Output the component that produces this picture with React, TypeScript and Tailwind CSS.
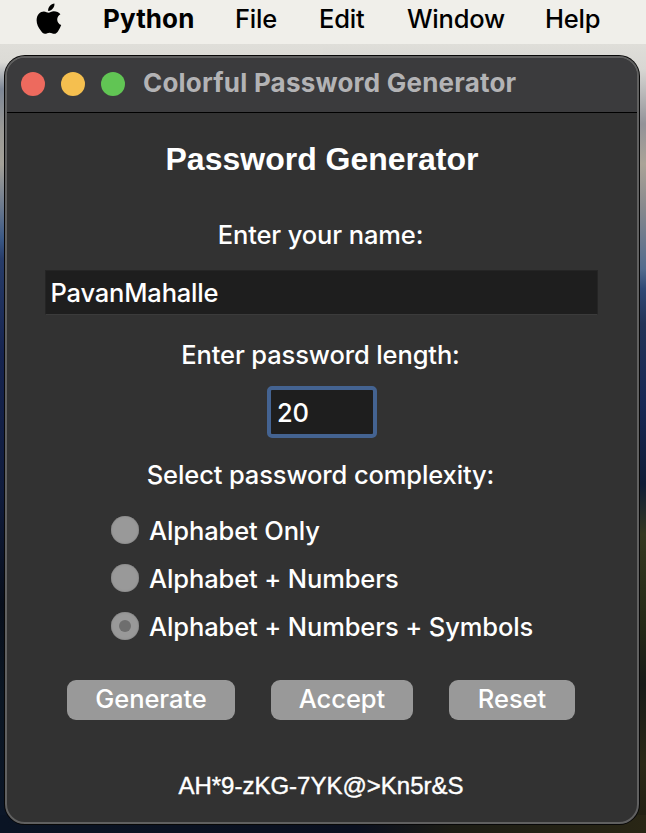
import { useState } from 'react';
import type { ReactNode } from 'react';

const levels = ['Alphabet Only', 'Alphabet + Numbers', 'Alphabet + Numbers + Symbols'];

function AppleLogo() {
  return (
    <svg viewBox="0 0 26 31" className="-mt-[2px] h-[31px] w-[26px] shrink-0" fill="black">
      <path d="M18.4.4c.3 2-.5 3.800-1.600 5.200-1.100 1.400-2.900 2.400-4.600 2.300-.3-1.900.5-3.800 1.600-5 1.200-1.400 3-2.400 4.600-2.500z" />
      <path d="M24.400 11.200c-2 1.200-3.200 3-3.200 5.200 0 2.500 1.500 4.600 4 5.600-.7 2.200-1.700 4.100-3 5.900-1.100 1.600-2.300 2.900-4 2.900-1.800 0-2.500-1.100-4.600-1.100-2 0-2.900 1.100-4.600 1.100-1.700 0-2.900-1.400-4.100-3.100C2.300 24.700.6 20.900.6 17.300c0-5.700 3.700-8.900 7.300-8.900 1.900 0 3.500 1.300 4.700 1.300 1.100 0 2.900-1.400 5.200-1.400 2.700 0 5.200 1.100 6.600 2.900z" />
    </svg>
  );
}

function PushButton({ width, children }: { width: string; children: ReactNode }) {
  return (
    <button className={`flex h-10 ${width} items-center justify-center rounded-[9px] bg-[#999999] pb-[2px] tracking-[-0.05px] whitespace-nowrap text-white`}>
      {children}
    </button>
  );
}

export default function App() {
  const [level, setLevel] = useState(2);
  return (
    <div className="flex h-[833px] w-[646px] flex-col overflow-hidden bg-[#131b29] bg-[linear-gradient(90deg,#0a1424_0%,#0a1020_55%,#1d1d15_70%,#292615_100%),linear-gradient(180deg,#dfded9_0px,#d8d7d3_25px,#929298_80px,#aaa397_120px,#86888d_165px,#526b8d_225px,#2f4875_245px,#223357_280px,#172754_360px,#101c36_440px,#343820_490px,#252916_580px,#181b18_640px,#2b2816_720px,#1f1e12_789px),linear-gradient(180deg,#dfded9_0px,#dcdbd6_18px,#7e8796_45px,#9b9a96_85px,#a4a198_120px,#68778d_165px,#3a5885_195px,#273c69_215px,#162450_310px,#101c3d_450px,#080f1c_560px,#0b1724_650px,#0b1628_789px)] bg-[size:646px_18px,323px_789px,323px_789px] bg-[position:0px_815px,323px_44px,0px_44px] bg-no-repeat font-['Inter','Liberation_Sans',sans-serif] text-[25.5px]">
      <nav className="flex h-11 shrink-0 items-center bg-[#f0efea] pb-[6px] pl-[36px] tracking-[-0.2px] text-black">
        <AppleLogo />
        <span className="-mt-[2px] ml-[41px] w-[132px] text-[26px] font-bold tracking-[0.1px]">Python</span>
        <span className="w-[84px] font-[450]">File</span>
        <span className="w-[88px] font-[450]">Edit</span>
        <span className="w-[138px] font-[450]">Window</span>
        <span className="font-[450]">Help</span>
      </nav>

      <main className="mt-3 ml-[5px] flex h-[768px] w-[634px] flex-col overflow-hidden rounded-[20px] border-2 border-[#606060] bg-[#323232] shadow-[0_0_0_1px_#080808]">
        <header className="flex h-[55px] shrink-0 items-center gap-4 border-b border-black bg-[#3b3b3d] pb-[2px] pl-[14px]">
          <span className="size-6 rounded-full bg-[#ed6a5e]" />
          <span className="size-6 rounded-full bg-[#f5bf4f]" />
          <span className="size-6 rounded-full bg-[#61c554]" />
          <span className="-mt-[3px] ml-[2px] text-[26px] font-bold tracking-[0.21px] whitespace-nowrap text-[#b3b3b5]">Colorful Password Generator</span>
        </header>

        <section className="flex flex-col items-center font-[450] tracking-[-0.12px] text-white">
          <h1 className="mt-[26px] h-10 font-['Liberation_Sans',sans-serif] text-[32px] leading-10 font-bold tracking-normal">Password Generator</h1>
          <label className="mt-9 mr-[3px] h-10 leading-10">Enter your name:</label>
          <input
            defaultValue="PavanMahalle"
            className="mt-[15px] mr-[2px] h-[45px] w-[553px] border border-[#252525] border-b-[#3b3b3b] bg-[#1e1e1e] px-[5px] tracking-[-0.18px] outline-none"
          />
          <label className="mt-5 mr-[3px] h-10 leading-10">Enter password length:</label>
          <input
            defaultValue="20"
            className="mt-[11px] h-[52px] w-[110px] rounded-[5px] border-4 border-[#446391] bg-[#1e1e1e] px-[6px] outline-none"
          />
          <label className="mt-[17px] mr-[3px] h-10 leading-10">Select password complexity:</label>

          <div className="mt-[11px] flex w-full flex-col pl-[104px]">
            {levels.map((label, i) => (
              <button key={label} onClick={() => setLevel(i)} className="flex h-12 items-center gap-[10px] text-left">
                <span className="flex size-7 items-center justify-center rounded-full bg-[#999999] shadow-[inset_0_0_2px_#777777]">
                  {level === i && <span className="size-3 rounded-full bg-[#6e6e6e]" />}
                </span>
                <span className="pt-[2px] whitespace-nowrap">{label}</span>
              </button>
            ))}
          </div>

          <div className="mt-[30px] flex w-full gap-9 pl-[60px]">
            <PushButton width="w-[168px]">Generate</PushButton>
            <PushButton width="w-[142px]">Accept</PushButton>
            <PushButton width="w-[126px]">Reset</PushButton>
          </div>

          <output className="mt-[46px] mr-[2px] h-10 font-['Liberation_Sans',sans-serif] text-[24px] leading-10 tracking-normal [-webkit-text-stroke:0.4px_white]">AH*9-zKG-7YK@&gt;Kn5r&amp;S</output>
        </section>
      </main>
    </div>
  );
}
